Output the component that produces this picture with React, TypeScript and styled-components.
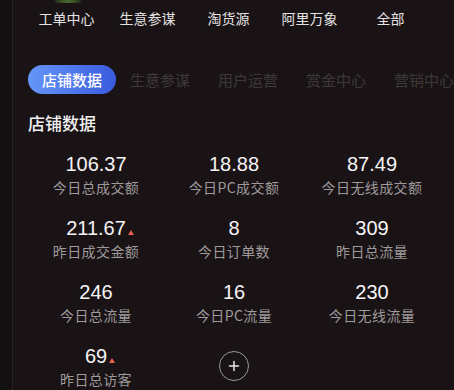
import React from "react";
import styled, { createGlobalStyle } from "styled-components";

const Global = createGlobalStyle`
  html, body { margin: 0; padding: 0; background: #181214; }
  * { box-sizing: border-box; }
`;

const Screen = styled.div`
  width: 454px;
  height: 390px;
  overflow: hidden;
  display: flex;
  background: #1a1315;
  font-family: "Noto Sans CJK SC", "Noto Sans", sans-serif;
`;

const LeftStrip = styled.div`
  width: 13px;
  flex: none;
  background: #121011;
  border-right: 1px solid #262324;
`;

const Main = styled.div`
  flex: 1;
  min-width: 0;
  display: flex;
  flex-direction: column;
  overflow: hidden;
`;

const Peek = styled.div`
  width: 26px;
  height: 3px;
  margin-left: 42px;
  border-radius: 0 0 6px 6px;
  background: linear-gradient(90deg, #22301c, #4a6a2c, #22301c);
`;

const Nav = styled.div`
  display: grid;
  grid-template-columns: repeat(5, 81px);
  padding-left: 13px;
  margin-top: 5px;
`;

const NavItem = styled.div`
  text-align: center;
  font-size: 14px;
  line-height: 20px;
  color: #e4e2e3;
  white-space: nowrap;
`;

const Tabs = styled.div`
  display: flex;
  margin-top: 37px;
  padding-left: 15px;
  white-space: nowrap;
`;

const Tab = styled.div<{ $active?: boolean }>`
  flex: none;
  height: 29px;
  padding: 0 14px;
  border-radius: 15px;
  display: flex;
  align-items: center;
  font-size: 15px;
  color: ${(p) => (p.$active ? "#ffffff" : "#3d383a")};
  font-weight: ${(p) => (p.$active ? 500 : 400)};
  background: ${(p) =>
    p.$active ? "linear-gradient(90deg, #6696f8 0%, #4b72ea 60%, #3a5bdc 100%)" : "transparent"};
`;

const Title = styled.div`
  margin-top: 17px;
  padding-left: 15px;
  font-size: 17px;
  line-height: 24px;
  font-weight: 500;
  color: #f2f0f1;
`;

const Grid = styled.div`
  display: grid;
  grid-template-columns: repeat(3, 138px);
  row-gap: 20px;
  margin-top: 17px;
  padding-left: 14px;
`;

const Cell = styled.div`
  height: 44px;
  display: flex;
  flex-direction: column;
  align-items: center;
  justify-content: center;
`;

const Value = styled.div`
  position: relative;
  font-family: "Liberation Sans", "Noto Sans", sans-serif;
  font-size: 20px;
  line-height: 24px;
  color: #f6f4f5;
`;

const Up = styled.span`
  position: absolute;
  left: 100%;
  bottom: 5px;
  margin-left: 2px;
  width: 0;
  height: 0;
  border-left: 3px solid transparent;
  border-right: 3px solid transparent;
  border-bottom: 5px solid #e5614c;
`;

const Label = styled.div`
  font-size: 14px;
  line-height: 20px;
  margin-top: 1px;
  letter-spacing: 0.4px;
  color: #9e9a9b;
  white-space: nowrap;
`;

const AddButton = styled.div`
  width: 30px;
  height: 30px;
  border-radius: 50%;
  border: 1.5px solid #9a9697;
  display: flex;
  align-items: center;
  justify-content: center;
`;

type Stat = { v: string; l: string; up?: boolean };

const stats: Stat[] = [
  { v: "106.37", l: "今日总成交额" },
  { v: "18.88", l: "今日PC成交额" },
  { v: "87.49", l: "今日无线成交额" },
  { v: "211.67", l: "昨日成交金额", up: true },
  { v: "8", l: "今日订单数" },
  { v: "309", l: "昨日总流量" },
  { v: "246", l: "今日总流量" },
  { v: "16", l: "今日PC流量" },
  { v: "230", l: "今日无线流量" },
  { v: "69", l: "昨日总访客", up: true },
];

export default function App() {
  return (
    <>
      <Global />
      <Screen>
        <LeftStrip />
        <Main>
          <Peek />
          <Nav>
            {["工单中心", "生意参谋", "淘货源", "阿里万象", "全部"].map((t) => (
              <NavItem key={t}>{t}</NavItem>
            ))}
          </Nav>
          <Tabs>
            {["店铺数据", "生意参谋", "用户运营", "赏金中心", "营销中心"].map((t, i) => (
              <Tab key={t} $active={i === 0}>
                {t}
              </Tab>
            ))}
          </Tabs>
          <Title>店铺数据</Title>
          <Grid>
            {stats.map((s) => (
              <Cell key={s.l}>
                <Value>
                  {s.v}
                  {s.up && <Up />}
                </Value>
                <Label>{s.l}</Label>
              </Cell>
            ))}
            <Cell>
              <AddButton>
                <svg width="12" height="12" viewBox="0 0 12 12">
                  <path d="M6 1.5v9M1.5 6h9" stroke="#e8e6e7" strokeWidth="1.5" strokeLinecap="round" />
                </svg>
              </AddButton>
            </Cell>
          </Grid>
        </Main>
      </Screen>
    </>
  );
}
